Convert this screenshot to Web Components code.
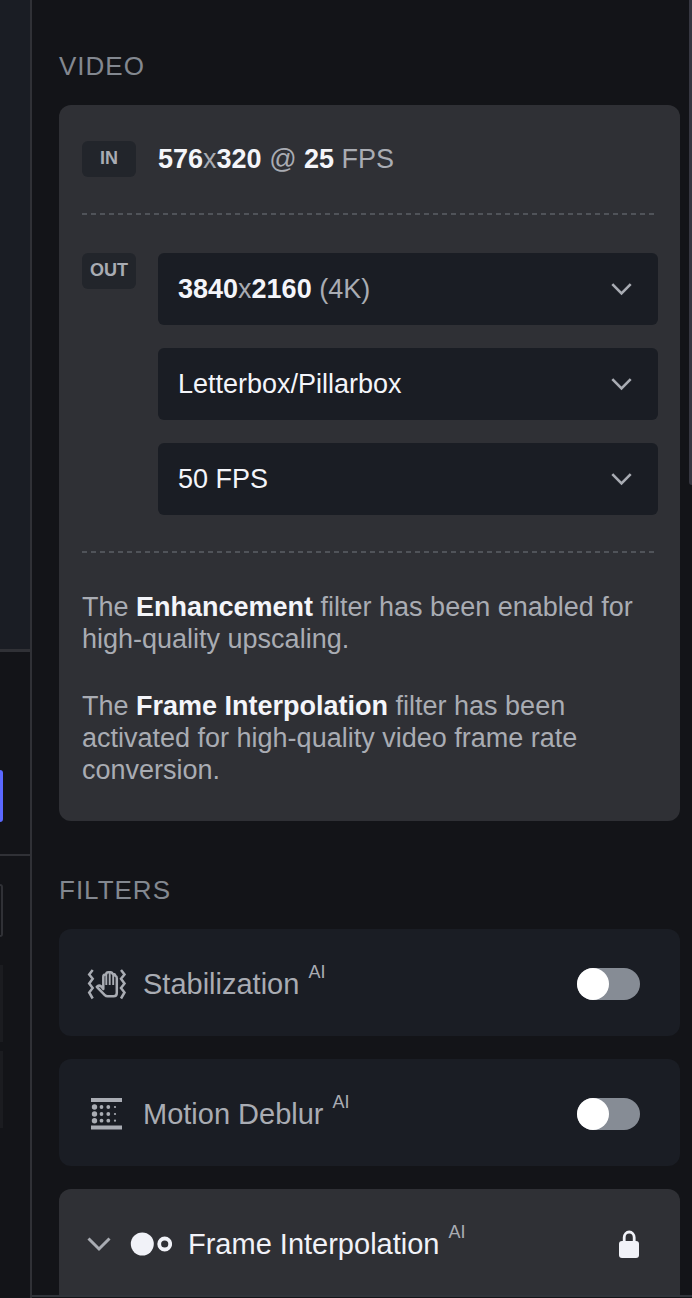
<!DOCTYPE html>
<html lang="en">
<head>
<meta charset="utf-8">
<meta name="viewport" content="width=device-width, initial-scale=1">
<title>Video settings</title>
<style>
    body {
        background: #131418;
        color: #a9acb3;
        font-family: "Liberation Sans", Arial, sans-serif;
        font-size: 27px;
        line-height: 32px;
        margin: 0;
    }

    b {
        color: #f4f5fa;
    }

    p {
        margin: 0;
    }
</style>
</head>
<body>
<app-shell>
    <preview-edge slot="side"></preview-edge>

    <settings-group heading="Video">
        <video-card>
            <tag-row tag="IN"><p><b>576</b>x<b>320</b> @ <b>25</b> FPS</p></tag-row>
            <dash-line></dash-line>
            <tag-row tag="OUT">
                <select-box label="Resolution" options="3840x2160 (4K)|1920x1080 (HD)"><span><b>3840</b>x<b>2160</b> (4K)</span></select-box>
                <select-box label="Fit" options="Letterbox/Pillarbox|Crop"></select-box>
                <select-box label="Frame rate" options="50 FPS|25 FPS"></select-box>
            </tag-row>
            <dash-line></dash-line>
            <note-text>
                <p>The <b>Enhancement</b> filter has been enabled for high-quality upscaling.</p>
                <p>The <b>Frame Interpolation</b> filter has been activated for high-quality video frame rate conversion.</p>
            </note-text>
        </video-card>
    </settings-group>

    <settings-group heading="Filters">
        <filter-card label="Stabilization" icon="hand"></filter-card>
        <filter-card label="Motion Deblur" icon="blur"></filter-card>
        <filter-card label="Frame Interpolation" icon="frames" locked></filter-card>
    </settings-group>
</app-shell>

<script>
class BaseElement extends HTMLElement {
    constructor() {
        super()
        this.attachShadow({ mode: 'open' });
    }

    Js() {

    }

    connectedCallback() {
        this.shadowRoot.innerHTML = `
                <style>* { box-sizing: border-box; }</style>
                ${this.Css()}
                ${this.HTML()}
                `;
        this.Js();
    }
}

const chevron = (width, height) => `<svg width="${width}" height="${height}" viewBox="0 0 24 16" fill="none" stroke="#a9acb3" stroke-width="3"><path d="M1.500 2.500 12 13 22.500 2.500"/></svg>`;

const ICONS = {
    hand: `<svg width="40" height="32" viewBox="0 0 40 32" fill="none" stroke="#a9acb3">
        <path d="M5.700 2 2.200 6.500l3.500 4.300-3.500 4.700 3.500 4.500-3.500 4.500 3.500 6M34 2l3.500 4.500-3.500 4.300 3.500 4.700-3.500 4.500 3.500 4.500-3.500 6" stroke-width="2.500"/>
        <path d="M16.300 21V9q0-2.500 2-2.500h.7q.3-2.300 2.300-2.300h2.200q1.700 0 2 1.700h.8q1.800 0 2 2h.3q1.200.3 1.200 2.300V25q0 3.300-3.200 3.300h-6q-1.600 0-2.800-1.200l-8-8.300q2-2.300 4.500-.3z" stroke-width="2.500" stroke-linejoin="round"/>
        <path d="M19.300 6.500v10.500M22.700 5v12M26.200 7v10" stroke-width="1.900"/></svg>`,
    blur: `<svg width="40" height="32" viewBox="0 0 40 32" fill="#a9acb3">
        <path d="M4 0h31v4H4zM4 27.500h31v4H4z"/>
        <circle cx="7.500" cy="9" r="2.700"/><circle cx="7.500" cy="16" r="2.700"/><circle cx="7.500" cy="22.700" r="2.700"/>
        <circle cx="14.500" cy="9" r="1.900"/><circle cx="14.500" cy="16" r="1.900"/><circle cx="14.500" cy="22.700" r="1.900"/>
        <circle cx="21.300" cy="9" r="1.900"/><circle cx="21.300" cy="16" r="1.900"/><circle cx="21.300" cy="22.700" r="1.900"/>
        <circle cx="28" cy="9" r="1.100"/><circle cx="28" cy="16" r="1.100"/><circle cx="28" cy="22.700" r="1.100"/></svg>`,
    frames: `<svg width="42" height="24" viewBox="0 0 42 24">
        <circle cx="12.300" cy="12" r="11.500" fill="#f1f2f8"/>
        <circle cx="34.700" cy="12" r="5.500" fill="none" stroke="#f1f2f8" stroke-width="3.800"/></svg>`,
    lock: `<svg width="21" height="28" viewBox="0 0 21 28">
        <path d="M5.200 12V7.500a5 5.500 0 0 1 10 0V12" fill="none" stroke="#f1f2f8" stroke-width="2.800"/>
        <rect y="11" width="20" height="17" rx="3" fill="#f1f2f8"/></svg>`
};

class AppShell extends BaseElement {
    Css() {
        return `
        <style>
    :host {
        display: grid;
        grid-template-columns: 32px 1fr;
        height: 100vh;
        overflow: hidden;
    }

    .panel {
        border-bottom: 2px solid #30343a;
        display: grid;
        grid-template-columns: 1fr 3px;
        margin-bottom: 1px;
        min-height: 0;
        overflow: hidden;
    }

    main {
        display: flex;
        flex-direction: column;
        gap: 54px;
        min-width: 0;
        padding: 51px 9px 0 27px;
    }

    .thumb {
        background: #363741;
        border-radius: 0 0 0 3px;
        height: 485px;
    }
</style>`
    }
    HTML() {
        return `<slot name="side"></slot>
        <div class="panel"><main><slot></slot></main><div class="thumb"></div></div>`
    }
}

// Right edge of the preview and timeline panes
class PreviewEdge extends BaseElement {
    Css() {
        return `
        <style>
    :host {
        border-right: 2px solid #303136;
        display: flex;
        flex-direction: column;
        overflow: hidden;
    }

    .preview {
        background: #1a1d24;
        border-bottom: 3px solid #303136;
        flex: none;
        height: 652px;
    }

    .actions {
        border-bottom: 2px solid #303136;
        flex: none;
        height: 204px;
        padding-top: 118px;
    }

    button {
        background: #5b68ff;
        border: 0;
        border-radius: 0 6px 6px 0;
        display: block;
        height: 52px;
        padding: 0;
        width: 3px;
    }

    .tracks {
        display: flex;
        flex-direction: column;
        gap: 9px;
        padding-top: 28px;
        width: 3px;
    }

    .field {
        border: 2px solid #303136;
        border-left: 0;
        border-radius: 0 6px 6px 0;
        height: 53px;
        margin-bottom: 19px;
    }

    .track {
        background: #1b1c20;
        height: 77px;
    }
</style>`
    }
    HTML() {
        return `<div class="preview"></div>
        <div class="actions"><button type="button" aria-label="Export"></button></div>
        <div class="tracks"><div class="field"></div><div class="track"></div><div class="track"></div></div>`
    }
}

class SettingsGroup extends BaseElement {
    Css() {
        return `
        <style>
    :host {
        display: flex;
        flex-direction: column;
        gap: 23px;
    }

    h2 {
        color: #838890;
        font-size: 26px;
        font-weight: 400;
        letter-spacing: 1px;
        line-height: 31px;
        margin: 0;
        text-transform: uppercase;
    }
</style>`
    }
    HTML() {
        return `<h2>${this.getAttribute('heading')}</h2><slot></slot>`
    }
}

class VideoCard extends BaseElement {
    Css() {
        return `
        <style>
    :host {
        background: #2f3035;
        border-radius: 12px;
        display: flex;
        flex-direction: column;
        padding: 36px 22px 35px 23px;
    }
</style>`
    }
    HTML() {
        return `<slot></slot>`
    }
}

class TagRow extends BaseElement {
    Css() {
        return `
        <style>
    :host {
        align-items: start;
        display: grid;
        gap: 22px;
        grid-template-columns: 54px 1fr;
    }

    .tag {
        background: #22252b;
        border-radius: 6px;
        font-size: 18px;
        font-weight: 700;
        line-height: 34px;
        padding-bottom: 2px;
        text-align: center;
    }

    .content {
        display: grid;
        gap: 23px;
        min-width: 0;
    }

    ::slotted(p) {
        line-height: 36px;
    }
</style>`
    }
    HTML() {
        return `<div class="tag">${this.getAttribute('tag')}</div><div class="content"><slot></slot></div>`
    }
}

class DashLine extends BaseElement {
    Css() {
        return `
        <style>
    :host {
        background: repeating-linear-gradient(90deg, #505359 0 5px, transparent 5px 9px);
        display: block;
        height: 2px;
        margin: 36px 4px 38px 0;
    }
</style>`
    }
    HTML() {
        return ``
    }
}

class SelectBox extends BaseElement {
    Css() {
        return `
        <style>
    :host {
        align-items: center;
        background: #1a1d24;
        border-radius: 6px;
        display: grid;
        height: 72px;
    }

    select, slot, svg {
        grid-area: 1 / 1;
    }

    select {
        appearance: none;
        background: none;
        border: 0;
        color: #f4f5fa;
        font: inherit;
        height: 100%;
        padding: 0 60px 0 20px;
        width: 100%;
    }

    /* The slotted label replaces the plain text of the select */
    select.covered {
        opacity: 0;
    }

    slot {
        display: block;
        padding: 0 60px 0 20px;
        pointer-events: none;
    }

    svg {
        justify-self: end;
        margin-right: 26px;
        pointer-events: none;
    }
</style>`
    }
    HTML() {
        const options = this.getAttribute('options').split('|');
        return `<select aria-label="${this.getAttribute('label')}">${options.map(o => `<option>${o}</option>`).join('')}</select>
        <slot></slot>${chevron(21, 14)}`
    }
    Js() {
        const select = this.shadowRoot.querySelector('select');
        select.classList.toggle('covered', this.children.length > 0);
        select.addEventListener('change', () => {
            this.replaceChildren();
            select.classList.remove('covered');
        });
    }
}

class NoteText extends BaseElement {
    Css() {
        return `
        <style>
    :host {
        display: flex;
        flex-direction: column;
        gap: 35px;
    }
</style>`
    }
    HTML() {
        return `<slot></slot>`
    }
}

class FilterCard extends BaseElement {
    Css() {
        return `
        <style>
    :host {
        align-items: center;
        background: #1a1d24;
        border-radius: 12px;
        display: flex;
        flex: none;
        font-size: 29px;
        height: 104px;
        padding: 3px 40px 0 28px;
    }

    /* An open card runs on below its header */
    :host([locked]) {
        background: #2f3035;
        color: #f1f2f8;
        padding-bottom: 24px;
    }

    svg {
        display: block;
        flex: none;
    }

    .name {
        align-items: center;
        display: flex;
        flex: 1;
        gap: 16px;
    }

    .expand {
        background: none;
        border: 0;
        margin-right: 19px;
        padding: 0;
    }

    sup {
        color: #a9acb3;
        font-size: 18px;
        line-height: 0;
        margin-left: 9px;
        vertical-align: 16px;
    }

    input {
        appearance: none;
        background: #868c95;
        border-radius: 16px;
        display: flex;
        height: 32px;
        margin: 0;
        width: 63px;
    }

    input::before {
        background: #fff;
        border-radius: 50%;
        content: "";
        height: 32px;
        width: 32px;
    }

    input:checked {
        background: #5b68ff;
        justify-content: end;
    }
</style>`
    }
    HTML() {
        const locked = this.hasAttribute('locked');
        return `${locked ? `<button class="expand" type="button" aria-label="Expand">${chevron(24, 16)}</button>` : ''}
        <label class="name" for="toggle">${ICONS[this.getAttribute('icon')]}<span>${this.getAttribute('label')}<sup>AI</sup></span></label>
        ${locked ? ICONS.lock : '<input id="toggle" type="checkbox" role="switch">'}`
    }
}

window.customElements.define('app-shell', AppShell);
window.customElements.define('preview-edge', PreviewEdge);
window.customElements.define('settings-group', SettingsGroup);
window.customElements.define('video-card', VideoCard);
window.customElements.define('tag-row', TagRow);
window.customElements.define('dash-line', DashLine);
window.customElements.define('select-box', SelectBox);
window.customElements.define('note-text', NoteText);
window.customElements.define('filter-card', FilterCard);
</script>
</body>
</html>
